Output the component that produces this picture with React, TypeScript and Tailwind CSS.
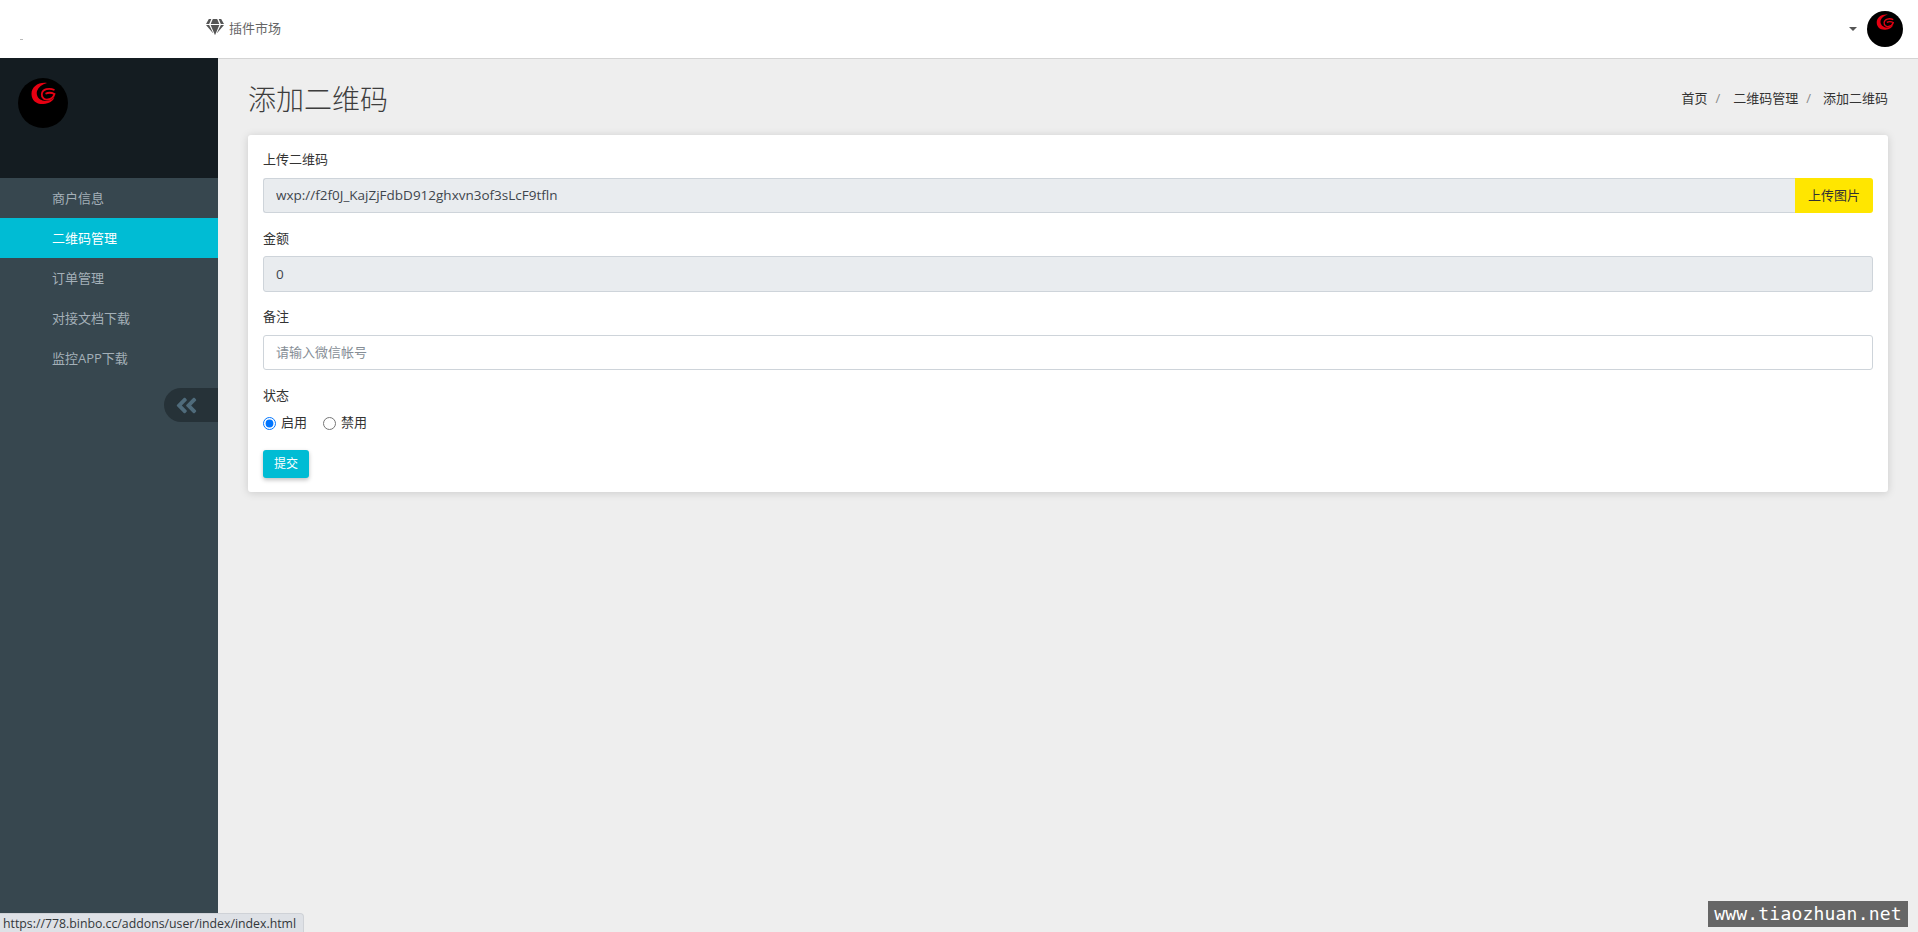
import React from 'react';
import { FaGem, FaAngleDoubleLeft } from 'react-icons/fa';

const menu = ['商户信息', '二维码管理', '订单管理', '对接文档下载', '监控APP下载'];

const Logo = ({ className }: { className: string }) => (
  <svg viewBox="0 0 50 50" className={className}>
    <circle cx="25" cy="25" r="25" fill="#000" />
    <path d="M29 5C20 4 13.5 9 13.5 16C13.5 23 19 26.5 25.5 26C31 25.6 35 23 36.5 19.5C33 22.5 28.5 23.5 24.5 22.5C20 21 18 17 19 13C20.5 9 24 6.5 29 5Z" fill="#e60012" />
    <path d="M36.5 12C31 9.5 24.5 11 23.8 16C23.4 20 27 22 30 21.5C33 21 35.5 19.5 36.5 16C33.5 14.5 30 14.5 27.5 15.8" fill="none" stroke="#e60012" strokeWidth="1.8" />
  </svg>
);

const Field = ({ label, children }: { label: string; children: React.ReactNode }) => (
  <div className="mb-[15.5px]">
    <label className="block text-[13px] leading-[19.5px] mb-2 text-[#333]">{label}</label>
    {children}
  </div>
);

export default function App() {
  return (
    <div className="relative h-screen flex flex-col overflow-hidden bg-[#eeeeee] text-[13px] font-['Open_Sans','Noto_Sans_CJK_SC',sans-serif]">
      <header className="relative h-[58px] shrink-0 bg-white flex items-center justify-between">
        <span className="absolute left-[20px] top-[39px] w-[3px] h-px bg-[#bbb]" />
        <div className="flex items-center pl-[206px] text-[#666] -mt-[1px]">
          <FaGem className="w-[18px] h-[16px] mr-[5px] -mt-[3px] text-[#555]" />
          <span>插件市场</span>
        </div>
        <div className="flex items-center pr-[15px]">
          <span className="w-0 h-0 mr-[10px] border-x-[4px] border-x-transparent border-t-[4px] border-t-[#555]" />
          <Logo className="w-9 h-9" />
        </div>
      </header>

      <div className="flex flex-1 min-h-0">
        <aside className="w-[218px] shrink-0 bg-[#37474f] flex flex-col">
          <div className="h-[120px] bg-[#141c21] pl-[18px] pt-5">
            <Logo className="w-[50px] h-[50px]" />
          </div>
          <nav>
            {menu.map((item, i) => (
              <div
                key={item}
                className={`h-10 pl-[52px] pt-px flex items-center ${i === 1 ? 'bg-[#00bcd4] text-white' : 'text-[#a4b0b8]'}`}
              >
                {item}
              </div>
            ))}
          </nav>
          <div className="mt-[10px] ml-auto w-[54px] h-[34px] rounded-l-[17px] bg-[#263238] flex items-center pl-[10px] text-[#4f6b7b]">
            <FaAngleDoubleLeft className="w-[25px] h-[25px]" />
          </div>
        </aside>

        <main className="flex-1 min-w-0 border-t border-[#d4d4d4] pl-[30px] pr-[30px]">
          <div className="h-[76px] flex items-center justify-between">
            <h1 className="text-[28px] font-light text-[#3d3d3d] mt-1">添加二维码</h1>
            <div className="flex items-center text-[#333] mt-[4px]">
              <span>首页</span>
              <span className="px-2 text-[#888]">/</span>
              <span className="ml-[5px]">二维码管理</span>
              <span className="px-2 text-[#888]">/</span>
              <span className="ml-[4px]">添加二维码</span>
            </div>
          </div>

          <div className="bg-white rounded-[3px] shadow-[0_1px_8px_rgba(0,0,0,0.15)] px-[15px] pt-[15px] h-[357px]">
            <Field label="上传二维码">
              <div className="flex">
                <input
                  disabled
                  value="wxp://f2f0J_KajZjFdbD912ghxvn3of3sLcF9tfln"
                  className="flex-1 h-[35.5px] px-[12px] text-[13.5px] text-[#3f464d] bg-[#e9ecef] border border-[#ced4da] border-r-0 rounded-l-[3px]"
                />
                <button className="w-[78px] h-[35.5px] bg-[#ffe600] text-[#333] rounded-r-[3px]">上传图片</button>
              </div>
            </Field>
            <Field label="金额">
              <input
                disabled
                value="0"
                className="w-full h-[35.5px] px-[12px] text-[13.5px] text-[#3f464d] bg-[#e9ecef] border border-[#ced4da] rounded-[3px]"
              />
            </Field>
            <Field label="备注">
              <input
                placeholder="请输入微信帐号"
                className="w-full h-[35.5px] px-[12px] text-[13px] text-[#495057] placeholder-[#868e96] bg-white border border-[#ced4da] rounded-[3px]"
              />
            </Field>
            <div>
              <label className="block text-[13px] leading-[19.5px] mb-2 text-[#333]">状态</label>
              <div className="flex items-center h-[20px] text-[#333]">
                <input type="radio" name="status" defaultChecked />
                <span className="ml-[5px] mr-4">启用</span>
                <input type="radio" name="status" />
                <span className="ml-[5px]">禁用</span>
              </div>
              <button className="mt-[17px] w-[46px] h-[28px] rounded-[3px] bg-[#00bcd4] text-white text-[12px] shadow-[0_2px_4px_rgba(0,0,0,0.25)]">
                提交
              </button>
            </div>
          </div>
        </main>
      </div>

      <div className="absolute left-0 bottom-0 w-[304px] h-[19px] pl-[3px] bg-[#dee1e6] border-t border-r border-[#cfd2d7] rounded-tr-[4px] text-[12.3px] leading-[19px] text-[#33373a] whitespace-nowrap">
        https://778.binbo.cc/addons/user/index/index.html
      </div>
      <div className="absolute right-[10px] bottom-[5px] w-[200px] h-[26px] bg-[#666] text-white text-[18px] tracking-[0.2px] leading-[26px] text-center font-['DejaVu_Sans_Mono',monospace]">
        www.tiaozhuan.net
      </div>
    </div>
  );
}
